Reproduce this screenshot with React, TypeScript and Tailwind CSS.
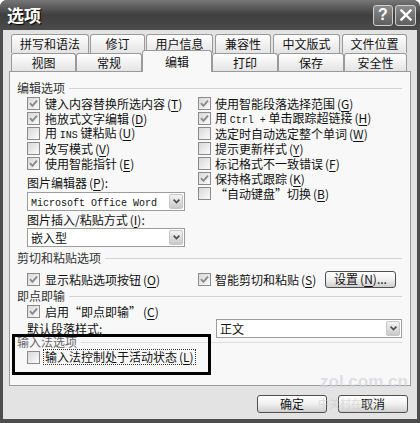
import React from 'react';

function Acc({ k }: { k: string }) {
  return (
    <span className="ml-[2px]">
      (<span className="underline underline-offset-[2px]">{k}</span>)
    </span>
  );
}

function Check({ on }: { on?: boolean }) {
  return (
    <span className="w-[13px] h-[13px] shrink-0 border border-[#8a8a8a] bg-linear-to-br from-[#d8d8d8] to-[#fbfbfb] flex items-center justify-center">
      {on && (
        <svg width="9" height="9" viewBox="0 0 9 9">
          <path d="M1 4.2 L3.4 6.8 L8 1.6" stroke="#8a8a8a" strokeWidth="1.9" fill="none" />
        </svg>
      )}
    </span>
  );
}

function Row({ on, children }: { on?: boolean; children: React.ReactNode }) {
  return (
    <div className="h-[15px] flex items-center gap-[5px] leading-[15px] whitespace-nowrap">
      <Check on={on} />
      <span>{children}</span>
    </div>
  );
}

function RRow({ on, children }: { on?: boolean; children: React.ReactNode }) {
  return (
    <div className="h-[15px] flex items-center gap-[4px] leading-[15px] whitespace-nowrap">
      <Check on={on} />
      <span>{children}</span>
    </div>
  );
}

function Header({ children }: { children: React.ReactNode }) {
  return (
    <div className="h-[16px] flex items-center pl-[7px] pr-[8px] gap-[4px] leading-[16px] text-[#333]">
      <span className="whitespace-nowrap">{children}</span>
      <span className="flex-1 h-px bg-[#d4d4d4]" />
    </div>
  );
}

function Select({ w, children }: { w: string; children: React.ReactNode }) {
  return (
    <div className={`h-[19px] border border-[#9c9c9c] bg-white flex items-center pl-[3px] pr-[1px] ${w}`}>
      <span className="flex-1 truncate leading-[17px]">{children}</span>
      <span className="w-[14px] h-[15px] rounded-[2px] border border-[#c6c6c6] bg-linear-to-b from-[#f4f4f4] to-[#c9c9c9] flex items-center justify-center">
        <svg width="7" height="5" viewBox="0 0 7 5">
          <path d="M0.6 0.6 L3.5 3.6 L6.4 0.6" stroke="#4a4a4a" strokeWidth="1.6" fill="none" />
        </svg>
      </span>
    </div>
  );
}

function Btn({ w, children }: { w: string; children: React.ReactNode }) {
  return (
    <div className={`rounded-[3px] border border-[#4f4f4f] bg-linear-to-b from-white via-[#f0f0f0] to-[#cfcfcf] flex items-center justify-center leading-none ${w}`}>
      {children}
    </div>
  );
}

const tab = 'rounded-t-[3px] border border-b-0 border-[#9a9a9a] bg-linear-to-b from-white to-[#e4e4e4] flex items-center justify-center';

export default function App() {
  return (
    <div className="w-[420px] h-[423px] bg-[#4d4d4d] rounded-t-[7px] flex flex-col relative overflow-hidden text-[12px] text-[#111] font-['Noto_Sans_CJK_SC','Liberation_Sans',sans-serif]">
      {/* title bar */}
      <div className="h-[30px] shrink-0 flex items-center pl-[7px] pr-[4px] bg-linear-to-b from-[#777] via-[#3f3f3f] to-[#4b4b4b]">
        <span className="text-white font-bold text-[17px] [text-shadow:1px_1px_1px_#000] flex-1">选项</span>
        <div className="flex gap-[2px]">
          <div className="w-[20px] h-[21px] rounded-[3px] border border-[#cfcfcf] bg-linear-to-b from-[#8c8c8c] to-[#5e5e5e] flex items-center justify-center text-white font-bold text-[16px] leading-none font-['Liberation_Sans',sans-serif]">?</div>
          <div className="w-[21px] h-[21px] rounded-[3px] border border-[#cfcfcf] bg-linear-to-b from-[#8c8c8c] to-[#5e5e5e] flex items-center justify-center">
            <svg width="12" height="12" viewBox="0 0 12 12">
              <path d="M1.5 1.5 L10.5 10.5 M10.5 1.5 L1.5 10.5" stroke="#fff" strokeWidth="2.4" strokeLinecap="square" />
            </svg>
          </div>
        </div>
      </div>

      {/* body */}
      <div className="flex-1 mx-[3px] mb-[4px] bg-[#e3e3e3] flex flex-col pt-[4px]">
        {/* tabs row 1 */}
        <div className="flex h-[19px] ml-[8px]">
          <div className={`${tab} w-[78px]`}>拼写和语法</div>
          <div className={`${tab} w-[55px] ml-[1px]`}>修订</div>
          <div className={`${tab} w-[67px] ml-[1px]`}>用户信息</div>
          <div className={`${tab} w-[56px] ml-[2px]`}>兼容性</div>
          <div className={`${tab} w-[67px] ml-[2px]`}>中文版式</div>
          <div className={`${tab} w-[65px] ml-[2px]`}>文件位置</div>
        </div>
        {/* tabs row 2 */}
        <div className="flex items-end h-[21px] -mt-[3px] ml-[8px] relative z-10">
          <div className={`${tab} w-[65px] h-[18px]`}>视图</div>
          <div className={`${tab} w-[66px] h-[18px]`}>常规</div>
          <div className="w-[70px] h-[22px] -mb-[1px] rounded-t-[3px] border border-b-0 border-[#9a9a9a] bg-[#f8f8f8] flex items-center justify-center">编辑</div>
          <div className={`${tab} w-[66px] h-[18px]`}>打印</div>
          <div className={`${tab} w-[66px] h-[18px]`}>保存</div>
          <div className={`${tab} w-[63px] h-[18px]`}>安全性</div>
        </div>

        {/* panel */}
        <div className="ml-[6px] w-[402px] h-[315px] shrink-0 border border-[#9a9a9a] bg-[#f8f8f8] pt-[8px] relative">
          <Header>编辑选项</Header>
          <div className="grid grid-cols-[171px_1fr] pl-[17px]">
            <div className="flex flex-col">
              <Row on>键入内容替换所选内容<Acc k="T" /></Row>
              <Row on>拖放式文字编辑<Acc k="D" /></Row>
              <Row>用 <span className="font-['Liberation_Mono',monospace] text-[10px]">INS</span> 键粘贴<Acc k="U" /></Row>
              <Row>改写模式<Acc k="V" /></Row>
              <Row on>使用智能指针<Acc k="E" /></Row>
              <div className="mt-[4px] h-[16px] leading-[16px]">图片编辑器<Acc k="P" />:</div>
              <div className="mt-[1px]">
                <Select w="w-[158px]">
                  <span className="font-['Liberation_Mono',monospace] text-[10px]">Microsoft Office Word</span>
                </Select>
              </div>
              <div className="h-[17px] leading-[17px]">图片插入/粘贴方式<Acc k="I" />:</div>
              <Select w="w-[158px]">嵌入型</Select>
            </div>
            <div className="flex flex-col">
              <RRow on>使用智能段落选择范围<Acc k="G" /></RRow>
              <RRow on>用 <span className="font-['Liberation_Mono',monospace] text-[10px]">Ctrl +</span> 单击跟踪超链接<Acc k="H" /></RRow>
              <RRow>选定时自动选定整个单词<Acc k="W" /></RRow>
              <RRow>提示更新样式<Acc k="Y" /></RRow>
              <RRow>标记格式不一致错误<Acc k="F" /></RRow>
              <RRow on>保持格式跟踪<Acc k="K" /></RRow>
              <RRow>“自动键盘”切换<Acc k="B" /></RRow>
            </div>
          </div>

          <div className="mt-[3px]">
            <Header>剪切和粘贴选项</Header>
          </div>
          <div className="h-[22px] pt-[4px] flex items-center pl-[17px] pr-[14px]">
            <div className="w-[171px]">
              <Row on>显示粘贴选项按钮<Acc k="O" /></Row>
            </div>
            <RRow on>智能剪切和粘贴<Acc k="S" /></RRow>
            <div className="ml-auto">
              <Btn w="w-[71px] h-[17px]">设置<Acc k="N" />...</Btn>
            </div>
          </div>

          <Header>即点即输</Header>
          <div className="pl-[17px]">
            <Row on>启用“即点即输”<Acc k="C" /></Row>
          </div>
          <div className="h-[19px] flex items-center pl-[17px] pr-[8px]">
            <span>默认段落样式:</span>
            <div className="ml-auto">
              <Select w="w-[186px]">正文</Select>
            </div>
          </div>

          <div className="-mt-[2px] h-[12px] flex items-center pl-[7px] pr-[8px] gap-[4px] leading-[12px] text-[#666]">
            <span className="whitespace-nowrap">输入法选项</span>
            <span className="flex-1 h-px bg-[#dcdcdc]" />
          </div>
          <div className="h-[18px] flex items-center gap-[3px] pl-[17px] whitespace-nowrap">
            <Check />
            <span className="border border-dotted border-[#333] px-[1px] leading-[14px]">输入法控制处于活动状态<Acc k="L" /></span>
          </div>

          {/* annotation box drawn over the screenshot */}
          <div className="absolute left-[2px] top-[262px] w-[199px] h-[41px] border-[3px] border-black pointer-events-none" />
        </div>

        {/* bottom buttons */}
        <div className="mt-[9px] flex justify-end gap-[11px] pr-[9px]">
          <Btn w="w-[70px] h-[18px]">确定</Btn>
          <Btn w="w-[70px] h-[18px]">取消</Btn>
        </div>
      </div>

      {/* faint watermark */}
      <div className="absolute left-[320px] top-[373px] text-[17px] font-bold leading-none text-[#cfd3d9]/70 font-['Liberation_Sans',sans-serif] pointer-events-none">
        zol.com.cn
      </div>
      <div className="absolute left-[318px] top-[398px] text-[11px] leading-none text-[#c8c8c8]/60 pointer-events-none">
        中关村在线
      </div>
    </div>
  );
}
